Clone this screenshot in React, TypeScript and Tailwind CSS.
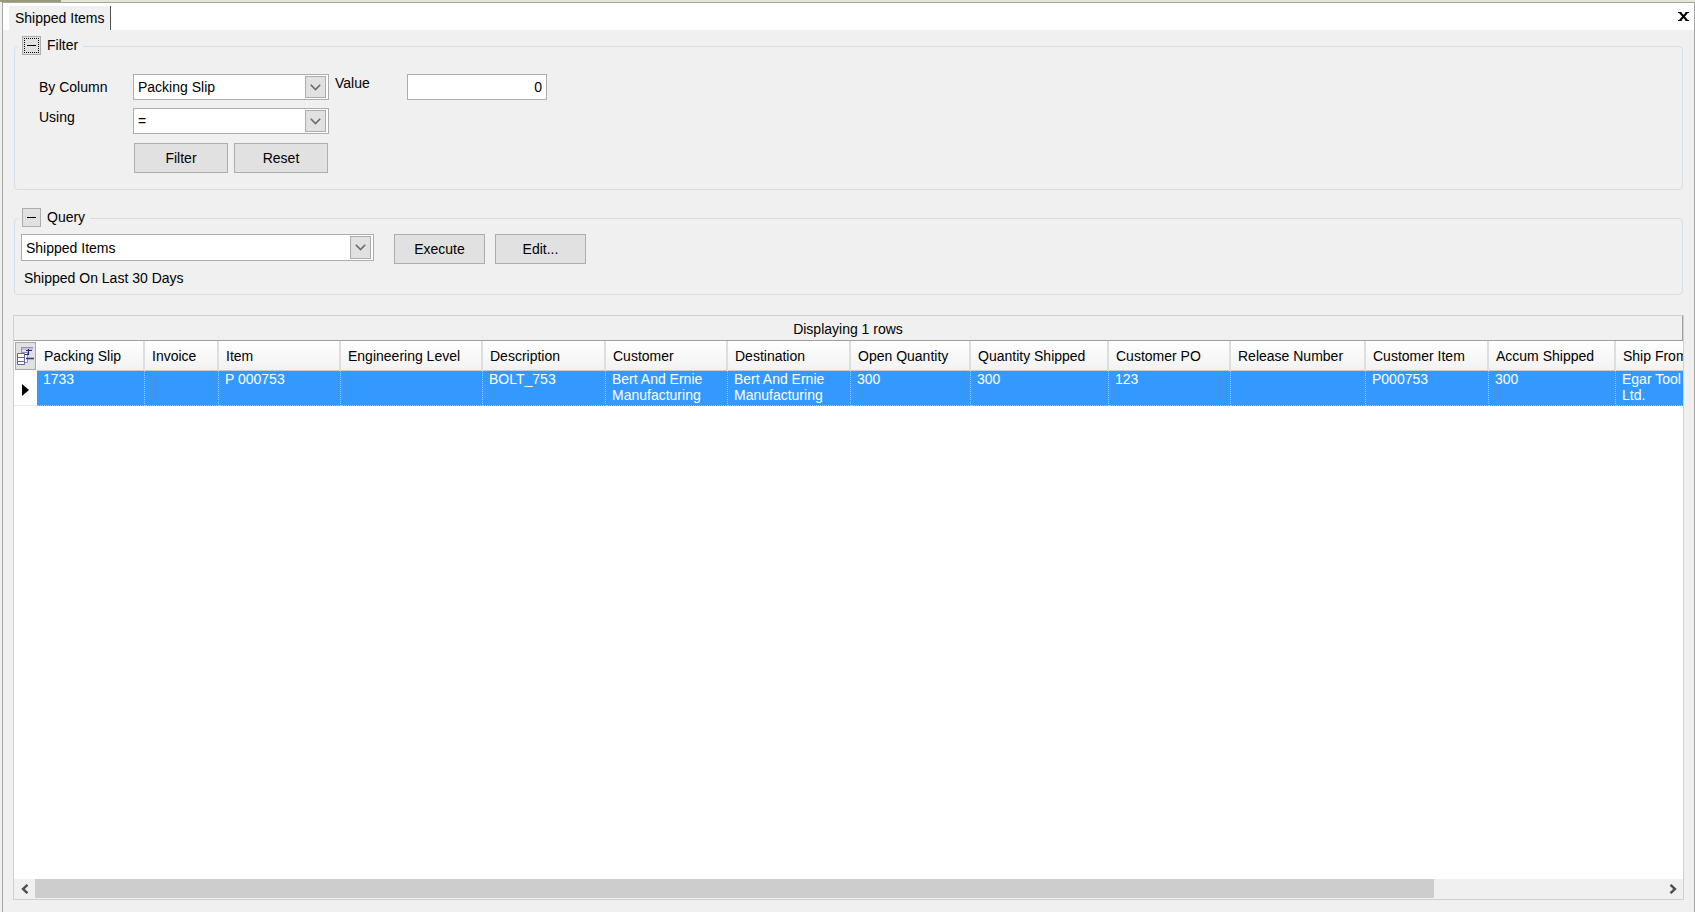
import React from "react";

interface Column {
  title: string;
  value: string;
  width: string;
}

const columns: Column[] = [
  { title: "Packing Slip", value: "1733", width: "w-[108px]" },
  { title: "Invoice", value: "", width: "w-[74px]" },
  { title: "Item", value: "P 000753", width: "w-[122px]" },
  { title: "Engineering Level", value: "", width: "w-[142px]" },
  { title: "Description", value: "BOLT_753", width: "w-[123px]" },
  { title: "Customer", value: "Bert And Ernie Manufacturing", width: "w-[122px]" },
  { title: "Destination", value: "Bert And Ernie Manufacturing", width: "w-[123px]" },
  { title: "Open Quantity", value: "300", width: "w-[120px]" },
  { title: "Quantity Shipped", value: "300", width: "w-[138px]" },
  { title: "Customer PO", value: "123", width: "w-[122px]" },
  { title: "Release Number", value: "", width: "w-[135px]" },
  { title: "Customer Item", value: "P000753", width: "w-[123px]" },
  { title: "Accum Shipped", value: "300", width: "w-[127px]" },
  { title: "Ship From", value: "Egar Tool Ltd.", width: "w-[90px]" },
];

interface ComboProps {
  id: string;
  options: string[];
  className?: string;
  label?: string;
}

const Combo: React.FC<ComboProps> = ({ id, options, className, label }) => {
  return (
    <div className={`relative ${className}`}>
      <select
        id={id}
        aria-label={label}
        className="block w-full h-full appearance-none bg-white border border-[#abadb3] pl-1 pr-7 outline-none"
      >
        {options.map((option) => (
          <option key={option}>{option}</option>
        ))}
      </select>
      <span className="pointer-events-none absolute right-[3px] top-[2px] bottom-[2px] w-[21px] flex items-center justify-center bg-[#e1e1e1] border border-[#adadad]">
        <svg width="11" height="7" viewBox="0 0 11 7" fill="none">
          <path d="M0.8 0.8L5.5 5.5L10.2 0.8" stroke="#6a6a6a" strokeWidth="1.6" />
        </svg>
      </span>
    </div>
  );
};

interface PushButtonProps {
  className: string;
  children: React.ReactNode;
}

const PushButton: React.FC<PushButtonProps> = ({ className, children }) => {
  return (
    <button
      type="button"
      className={`h-[30px] bg-[#e1e1e1] border border-[#adadad] hover:bg-[#e5f1fb] ${className}`}
    >
      {children}
    </button>
  );
};

interface GroupProps {
  title: string;
  focused?: boolean;
  className?: string;
  bodyClassName: string;
  children: React.ReactNode;
}

const Group: React.FC<GroupProps> = ({
  title,
  focused,
  className = "",
  bodyClassName,
  children,
}) => {
  return (
    <fieldset className={`min-w-0 mx-px border border-[#d3dfe6] rounded-[4px] ${className}`}>
      <legend className="ml-[3px] h-[21px] pl-1 pr-[5px]">
        <span className="flex items-start gap-[6px]">
          <button
            type="button"
            aria-label={`Collapse ${title}`}
            className="w-[19px] h-[19px] p-px bg-[#e1e1e1] border border-[#adadad]"
          >
            <span
              className={`w-full h-full flex items-center justify-center ${
                focused ? "border border-dotted border-black" : ""
              }`}
            >
              <span className="w-[9px] h-px bg-black"></span>
            </span>
          </button>
          <span className="leading-[18px]">{title}</span>
        </span>
      </legend>
      <div className={bodyClassName}>{children}</div>
    </fieldset>
  );
};

const ResultsGrid: React.FC = () => {
  return (
    <section className="flex-1 min-w-0 flex flex-col bg-white border border-[#c3d3e2]">
      <div className="h-[25px] flex items-center justify-center pt-[2px] bg-[#f0f0f0] border-b border-r border-[#a0a0a0]">
        Displaying 1 rows
      </div>
      <div className="flex-1 overflow-hidden">
        <table className="w-[1692px] table-fixed border-separate border-spacing-0 text-left">
          <thead>
            <tr className="h-[30px]">
              <th className="w-[23px] p-px">
                <button
                  type="button"
                  aria-label="Choose columns"
                  className="w-[21px] h-[28px] flex items-center justify-center bg-[#e1e1e1] border border-[#a8a8a8]"
                >
                  <svg width="17" height="18" viewBox="0 0 17 18" fill="none">
                    <path d="M4 0H16V3H4Z" fill="#c4c4de" />
                    <path d="M4.5 5V0.5H16" stroke="#8f8fbb" />
                    <path d="M4.5 5.5H10.5V15.5H4.5Z" fill="#fff" stroke="#8f8fbb" />
                    <path d="M0.5 6.5H7.5V17.5H0.5ZM0.5 10.5H7.5M0.5 14.5H7.5" fill="#fff" stroke="#6464a2" />
                    <path d="M9 11.5H17" stroke="#3b3b80" strokeWidth="1.6" />
                    <path d="M8 7.5H11.5V2M9 3.5H15" stroke="#2c2c60" strokeWidth="1.2" />
                  </svg>
                </button>
              </th>
              {columns.map((column) => (
                <th
                  key={column.title}
                  className={`${column.width} p-0 pl-[7px] font-normal whitespace-nowrap bg-linear-to-b from-white to-[#f2f2f2] border-r-2 border-b border-r-[#dcdfe0] border-b-[#c8cccf]`}
                >
                  {column.title}
                </th>
              ))}
            </tr>
          </thead>
          <tbody>
            <tr className="h-[35px] align-top text-white">
              <td className="p-0 pt-[3px] bg-white align-middle border-b border-[#e3ebf0]">
                <svg className="ml-2" width="7" height="12" viewBox="0 0 7 12">
                  <path d="M0 0L7 6L0 12Z" fill="#000" />
                </svg>
              </td>
              {columns.map((column) => (
                <td
                  key={column.title}
                  className="p-0 pl-[6px] bg-[#3399ff] leading-4 border-r border-b border-dotted border-[#a9c4dd]"
                >
                  {column.value}
                </td>
              ))}
            </tr>
          </tbody>
        </table>
      </div>
      <div className="h-5 flex pb-px bg-[#f0f0f0]">
        <button type="button" aria-label="Scroll left" className="w-[21px] flex items-center justify-center">
          <svg width="8" height="10" viewBox="0 0 8 10" fill="none">
            <path d="M6.5 0.8L2 5L6.5 9.2" stroke="#505050" strokeWidth="2.4" />
          </svg>
        </button>
        <div className="flex-1">
          <div className="w-[86%] h-full bg-[#cdcdcd]"></div>
        </div>
        <button type="button" aria-label="Scroll right" className="w-[21px] flex items-center justify-center">
          <svg width="8" height="10" viewBox="0 0 8 10" fill="none">
            <path d="M1.5 0.8L6 5L1.5 9.2" stroke="#505050" strokeWidth="2.4" />
          </svg>
        </button>
      </div>
    </section>
  );
};

const App: React.FC = () => {
  return (
    <div className="min-h-screen flex flex-col bg-[#f0f0f0] font-['Liberation_Sans',Arial,sans-serif] text-sm text-black">
      <div className="h-[2px] bg-[#e4e6d4]">
        <div className="w-[61px] h-full bg-[#9a9a78]"></div>
      </div>
      <div className="flex-1 flex flex-col ml-[2px] border-l border-t border-r border-[#a5a5a5]">
        <header className="h-[27px] flex items-end justify-between bg-white pl-[6px] pr-[5px]">
          <a
            href="#shipped-items"
            className="h-6 flex items-center pl-[6px] pr-[5px] pb-px bg-[#f0f0f0] border-r border-[#505050]"
          >
            Shipped Items
          </a>
          <button type="button" aria-label="Close" className="self-center">
            <svg width="11" height="9" viewBox="0 0 11 9" fill="none" stroke="#000">
              <path d="M2 0.5L9 8.5M9 0.5L2 8.5" strokeWidth="2" />
              <path d="M0 0.5H3.5M7.5 0.5H11M0 8.5H3.5M7.5 8.5H11" />
            </svg>
          </button>
        </header>

        <main className="flex-1 flex flex-col pt-[6px] px-[10px] pb-3">
          <Group title="Filter" focused bodyClassName="pt-[17px] pb-4 pl-6">
            <div className="flex items-start">
              <div className="grid grid-cols-[94px_196px] gap-y-2">
                <label htmlFor="by-column" className="self-center">
                  By Column
                </label>
                <Combo id="by-column" options={["Packing Slip", "Invoice", "Item"]} className="h-[26px]" />
                <label htmlFor="using" className="leading-[18px]">
                  Using
                </label>
                <Combo id="using" options={["=", "<", ">"]} className="h-[26px]" />
                <div className="col-start-2 flex justify-between px-px pt-px">
                  <PushButton className="w-[94px]">Filter</PushButton>
                  <PushButton className="w-[94px]">Reset</PushButton>
                </div>
              </div>
              <label htmlFor="value" className="w-[72px] ml-[6px] leading-[18px]">
                Value
              </label>
              <input
                id="value"
                type="text"
                defaultValue="0"
                className="w-[140px] h-[26px] px-1 text-right bg-white border border-[#abadb3] outline-none"
              />
            </div>
          </Group>

          <Group title="Query" className="mt-[18px] mb-5" bodyClassName="pt-[5px] pb-[6px] pl-[6px]">
            <div className="flex items-start">
              <Combo
                id="query"
                label="Query"
                options={["Shipped Items"]}
                className="w-[353px] h-[27px] mr-5"
              />
              <PushButton className="w-[91px] mr-[10px]">Execute</PushButton>
              <PushButton className="w-[91px]">Edit...</PushButton>
            </div>
            <p className="mt-1 pl-[3px]">Shipped On Last 30 Days</p>
          </Group>

          <ResultsGrid />
        </main>
      </div>
    </div>
  );
};

export default App;
